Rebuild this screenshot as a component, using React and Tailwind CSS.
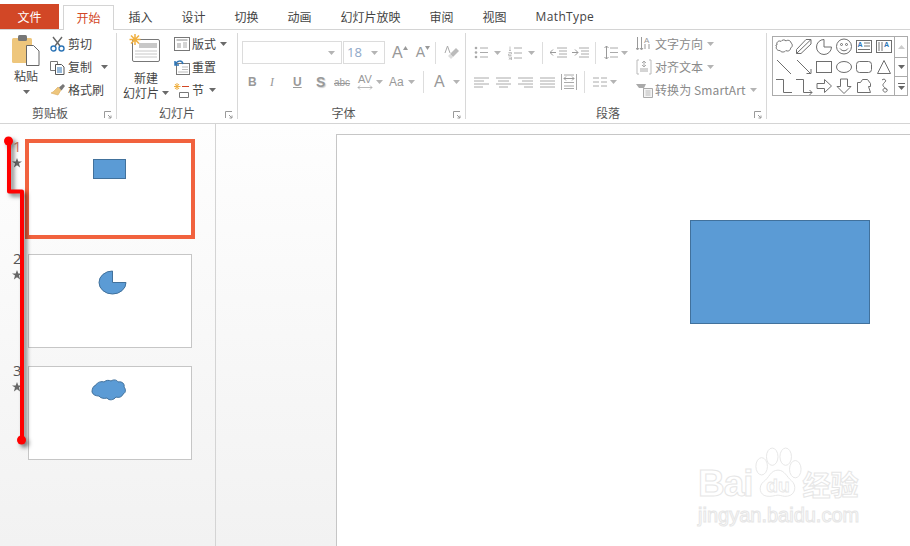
const FONT = "font-['Noto_Sans_CJK_SC','Noto_Sans',sans-serif]";

function Caret({ className = "", dim = false }) {
  return (
    <svg width="7" height="4" viewBox="0 0 7 4" className={`shrink-0 ${className}`}>
      <path d="M0 0H7L3.5 4Z" fill={dim ? "#b4b4b4" : "#6a6a6a"} />
    </svg>
  );
}

function Launcher() {
  return (
    <svg width="8" height="8" viewBox="0 0 8 8" className="absolute bottom-[3px] right-[4px]">
      <path d="M.5 7V.5H7M4 4l3 3M4.5 7H7V4.5" fill="none" stroke="#9a9a9a" />
    </svg>
  );
}

function Ico({ w = 16, h = 16, children, className = "" }) {
  return (
    <svg width={w} height={h} viewBox={`0 0 ${w} ${h}`} fill="none" className={`shrink-0 ${className}`}>
      {children}
    </svg>
  );
}

const tabs = ["插入", "设计", "切换", "动画", "幻灯片放映", "审阅", "视图"];

function TabBar() {
  return (
    <div className="flex h-[30px] items-end border-b border-[#d4d4d4] bg-white text-[12px] text-[#444]">
      <div className="flex h-[25px] w-[59px] items-center justify-center bg-[#d24726] text-white">文件</div>
      <div className="relative top-px ml-[4px] flex h-[25px] w-[51px] items-center justify-center border border-b-0 border-[#d4d4d4] bg-white text-[#d24726]">开始</div>
      {tabs.map((t) => (
        <div key={t} className="flex h-[25px] items-center px-[14.5px]">{t}</div>
      ))}
      <div className="flex h-[25px] items-center px-[14.5px] font-['Open_Sans',sans-serif] tracking-[0.35px]">MathType</div>
    </div>
  );
}

function Group({ label, className, children, labelClass = "" }) {
  return (
    <div className={`relative flex h-[92px] shrink-0 flex-col ${className}`}>
      <div className="flex min-h-0 flex-1">{children}</div>
      <div className={`pb-[1px] text-center text-[12px] leading-[16px] text-[#555] ${labelClass}`}>{label}</div>
      <Launcher />
    </div>
  );
}

function Sep() {
  return <div className="mt-[3px] h-[86px] w-px shrink-0 bg-[#d8d8d8]" />;
}

function Row({ icon, text, caret, className = "text-[#444]", cell = "w-[18px]" }) {
  return (
    <div className={`flex h-[23px] items-center whitespace-nowrap text-[12px] ${className}`}>
      <div className={`flex justify-start ${cell}`}>{icon}</div>
      <span>{text}</span>
      {caret}
    </div>
  );
}

function Clipboard() {
  return (
    <Group label="剪贴板" className="w-[116px]" labelClass="pr-[16px]">
      <div className="ml-[12px] flex w-[28px] flex-col items-center pt-[5px]">
        <Ico w={30} h={31}>
          <rect x="1" y="3" width="20" height="25" rx="1.5" fill="#eec67c" />
          <rect x="7" y="0" width="9" height="6" rx="1.5" fill="#777" />
          <path d="M15.5 10.5h7l5.5 5.5v14.5h-12.5z" fill="#fff" stroke="#666" />
        </Ico>
        <div className="mt-[2px] text-[12px] leading-[16px] text-[#444]">粘贴</div>
        <Caret className="mt-[6px]" />
      </div>
      <div className="ml-[10px] flex flex-col pt-[2.5px]">
        <Row text="剪切" icon={
          <Ico w={15} h={16}>
            <path d="M3 1l7 9M12 1L5 10" stroke="#666" strokeWidth="1.4" />
            <circle cx="3.5" cy="12.5" r="2.5" stroke="#2e75b6" strokeWidth="1.4" />
            <circle cx="11.5" cy="12.5" r="2.5" stroke="#2e75b6" strokeWidth="1.4" />
          </Ico>} />
        <Row text="复制" caret={<Caret className="ml-[9px]" />} icon={
          <Ico w={15} h={15}>
            <path d="M.5 1.500h7v9h-7z" fill="#fff" stroke="#777" />
            <path d="M5.500 4.500h6l2.500 2.500v7.500H5.500z" fill="#fff" stroke="#555" />
            <path d="M7 8h5M7 10h5M7 12h5" stroke="#2e75b6" />
          </Ico>} />
        <Row text="格式刷" icon={
          <Ico w={16} h={14}>
            <path d="M8 4l3 3-3 5-7-2 2-1z" fill="#eec67c" stroke="#d8a95c" strokeWidth=".6" />
            <path d="M9 4.500l4-3.500 2 2-3.500 4.500z" fill="#777" />
          </Ico>} />
      </div>
    </Group>
  );
}

function SlidesGroup() {
  return (
    <Group label="幻灯片" className="w-[120px]">
      <div className="ml-[6px] flex w-[46px] flex-col items-center pt-[4px]">
        <Ico w={32} h={28} className="-ml-[3px]">
          <rect x="3.5" y="5.5" width="27" height="22" rx="1.5" fill="#fff" stroke="#777" />
          <rect x="10" y="9" width="18" height="5" fill="#c8c8c8" />
          <path d="M6 17h22M6 20h22M6 23h22" stroke="#c8c8c8" />
          <path d="M6 0v11M0.5 5.5h11M2 1.5l8 8M10 1.5l-8 8" stroke="#f0b040" strokeWidth="1.5" />
        </Ico>
        <div className="mt-[8px] whitespace-nowrap text-[12px] leading-[15px] text-[#444]">新建</div>
        <div className="flex items-center whitespace-nowrap text-[12px] leading-[15px] text-[#444]">
          幻灯片<Caret className="ml-[3px]" />
        </div>
      </div>
      <div className="ml-[5px] flex flex-col pt-[2.5px] text-[12px]">
        <Row text="版式" caret={<Caret className="ml-[4px]" />} icon={
          <Ico w={16} h={14}>
            <rect x=".5" y=".5" width="15" height="13" fill="#fff" stroke="#777" />
            <path d="M2.500 3h11" stroke="#888" /><path d="M3 6h4v5H3z" fill="#ccc" /><path d="M9 6h4M9 8h4M9 10h4" stroke="#aaa" />
          </Ico>} />
        <Row text="重置" icon={
          <Ico w={16} h={15}>
            <rect x="2.500" y="3.500" width="13" height="11" fill="#fff" stroke="#777" />
            <path d="M8 7h6M8 9.500h6M4 12h10" stroke="#bbb" />
            <path d="M1 5c2-5 7-5 8-1M1 1v4h4" stroke="#2e75b6" strokeWidth="1.5" />
          </Ico>} />
        <Row text="节" caret={<Caret className="ml-[5px]" />} icon={
          <Ico w={16} h={15}>
            <path d="M3 0v7M0 3.500h6.500M1 1l4 5M5 1L1 6" stroke="#f0b040" />
            <path d="M8 3.500h7" stroke="#d24726" />
            <path d="M5.500 9.500h9v5h-9z" stroke="#777" />
          </Ico>} />
      </div>
    </Group>
  );
}

function FontGroup() {
  const t = "text-[#999] font-['Liberation_Sans',sans-serif]";
  return (
    <Group label="字体" className="w-[227px]" labelClass="pr-[16px]">
      <div className="flex flex-col pl-[4px] pt-[11px]">
        <div className="flex h-[23px] items-center">
          <div className="flex h-[23px] w-[100px] items-center justify-end border border-[#dcdcdc] bg-white pr-[6px]"><Caret dim /></div>
          <div className="ml-[1px] flex h-[23px] w-[42px] items-center justify-between border border-[#dcdcdc] bg-white pl-[3px] pr-[6px]">
            <span className="font-['Open_Sans',sans-serif] text-[13px] text-[#8fa8c8]">18</span><Caret dim />
          </div>
          <span className={`ml-[7px] text-[16px] ${t}`}>A</span>
          <Ico w={5} h={4} className="-mt-[10px]"><path d="M0 4L2.500 0 5 4z" fill="#999" /></Ico>
          <span className={`ml-[8px] text-[14px] ${t}`}>A</span>
          <Ico w={5} h={4} className="-mt-[10px]"><path d="M0 0L2.500 4 5 0z" fill="#999" /></Ico>
          <div className="ml-[5px] h-[22px] w-px bg-[#ddd]" />
          <Ico w={16} h={16} className="ml-[8px]">
            <path d="M6 9l6-6 3 3-6 6z" fill="#bbb" /><path d="M4 11l2-2 3 3-2 2z" fill="#ddd" />
            <path d="M1 8l2.500-7L6 8" stroke="#aaa" />
          </Ico>
        </div>
        <div className="mt-[7px] flex h-[22px] items-center">
          <span className={`ml-[6px] w-[8px] text-[12px] font-bold ${t}`}>B</span>
          <span className="ml-[14px] w-[6px] font-['Liberation_Serif',serif] text-[12px] italic text-[#999]">I</span>
          <span className={`ml-[17px] w-[9px] text-[12px] font-bold underline ${t}`}>U</span>
          <span className={`ml-[14px] w-[9px] text-[14px] font-bold [text-shadow:1px_1px_1px_#ccc] ${t}`}>S</span>
          <span className={`ml-[9px] w-[16px] text-[10px] line-through ${t}`}>abc</span>
          <div className="ml-[7px] flex h-[18px] w-[16px] flex-col items-center">
            <span className={`text-[11px] leading-[12px] ${t}`}>AV</span>
            <Ico w={16} h={5}><path d="M1 2.500h14M1 2.500l2-2M1 2.500l2 2M15 2.500l-2-2M15 2.500l-2 2" stroke="#aaa" strokeWidth=".8" /></Ico>
          </div>
          <Caret dim className="ml-[3px]" />
          <span className={`ml-[6px] w-[17px] text-[12px] ${t}`}>Aa</span>
          <Caret dim className="ml-[2px]" />
          <div className="ml-[8px] h-[22px] w-px bg-[#ddd]" />
          <span className={`ml-[10px] w-[11px] text-[16px] ${t}`}>A</span>
          <Caret dim className="ml-[8px]" />
        </div>
      </div>
    </Group>
  );
}

function Align({ a }) {
  const rows = [[0, 15], [a === "l" ? 0 : a === "r" ? 4 : a === "c" ? 2 : 0, a === "l" ? 10 : a === "r" ? 15 : a === "c" ? 13 : 15], [0, 15], [a === "l" ? 0 : a === "r" ? 6 : a === "c" ? 3 : 0, a === "l" ? 9 : a === "r" ? 15 : a === "c" ? 12 : 15]];
  return (
    <Ico w={15} h={11}>
      {rows.map(([s, e], i) => <path key={i} d={`M${s} ${i * 3 + 1}H${e}`} stroke="#aaa" />)}
    </Ico>
  );
}

function Paragraph() {
  const dim = "text-[#8a8a8a]";
  return (
    <Group label="段落" className="w-[300px]" labelClass="pr-[16px]">
      <div className="flex w-[170px] flex-col pl-[8px] pt-[11px]">
        <div className="flex h-[23px] items-center">
          <Ico w={14} h={13}>
            <circle cx="2" cy="2" r="1.3" fill="#aaa" /><circle cx="2" cy="6.5" r="1.3" fill="#aaa" /><circle cx="2" cy="11" r="1.3" fill="#aaa" />
            <path d="M6 2h8M6 6.500h8M6 11h8" stroke="#aaa" />
          </Ico>
          <Caret dim className="ml-[6px]" />
          <Ico w={14} h={14} className="ml-[7px]">
            <path d="M6 2h8M6 7h8M6 12h8" stroke="#aaa" />
            <path d="M2 .5v4M1 4.500h2M.5 6.500h3v1.500h-3v1.500h3M.5 11h3v3h-3M1 12.500h2.500" stroke="#aaa" strokeWidth=".7" />
          </Ico>
          <Caret dim className="ml-[6px]" />
          <div className="ml-[7px] h-[22px] w-px bg-[#ddd]" />
          <Ico w={17} h={11} className="ml-[7px]">
            <path d="M7 1h10M9 4h8M9 7h8M7 10h10" stroke="#aaa" /><path d="M0 5.500h6M0 5.500l3-3M0 5.500l3 3" stroke="#999" />
          </Ico>
          <Ico w={17} h={11} className="ml-[5px]">
            <path d="M7 1h10M9 4h8M9 7h8M7 10h10" stroke="#aaa" /><path d="M0 5.500h6M6 5.500l-3-3M6 5.500l-3 3" stroke="#999" />
          </Ico>
          <div className="ml-[6px] h-[22px] w-px bg-[#ddd]" />
          <Ico w={14} h={15} className="ml-[8px]">
            <path d="M2.500 1v13M.5 3l2-2 2 2M.5 12l2 2 2-2" stroke="#999" /><path d="M6 3h8M6 7.500h8M6 12h8" stroke="#aaa" />
          </Ico>
          <Caret dim className="ml-[3px]" />
        </div>
        <div className="mt-[7px] flex h-[22px] items-center gap-[7px]">
          <Align a="l" /><Align a="c" /><Align a="r" /><Align a="j" />
          <Ico w={16} h={16} className="-ml-[1px]">
            <path d="M.5 0v16M15.500 0v16" stroke="#aaa" /><path d="M3 1h10M3 12h10M3 14.500h10M3 8.500h10" stroke="#aaa" /><path d="M3 4.500h10M3 4.500l2-2M3 4.500l2 2M13 4.500l-2-2M13 4.500l-2 2" stroke="#999" />
          </Ico>
          <div className="h-[22px] w-px bg-[#ddd]" />
          <Ico w={14} h={10} className="ml-[1px]">
            <path d="M0 1h6M8 1h6M0 5h6M8 5h6M0 9h6M8 9h6" stroke="#aaa" />
          </Ico>
          <Caret dim className="-ml-[4px]" />
        </div>
      </div>
      <div className="flex flex-col pt-[2.5px]">
        <Row className={dim} cell="w-[19px]" text="文字方向" caret={<Caret dim className="ml-[4px]" />} icon={
          <Ico w={16} h={16}>
            <path d="M1.500 1v12M5.500 1v12M9 8v5M13 8v5" stroke="#999" /><path d="M0 12l1.500 2 1.500-2M4 12l1.500 2 1.500-2" stroke="#999" />
            <text x="8" y="7" fontSize="8" fill="#999" fontFamily="Liberation Sans">A</text>
          </Ico>} />
        <Row className={dim} cell="w-[19px]" text="对齐文本" caret={<Caret dim className="ml-[4px]" />} icon={
          <Ico w={16} h={16}>
            <path d="M3 1H1v14h2M13 1h2v14h-2" stroke="#bbb" /><path d="M8 2v6M6 4l2-2 2 2M6 6l2 2 2-2" stroke="#aaa" /><path d="M4 10h8M4 12h8" stroke="#aaa" />
          </Ico>} />
        <Row className={`${dim} tracking-[0.1px]`} cell="w-[19px]" text="转换为 SmartArt" caret={<Caret dim className="ml-[4px]" />} icon={
          <Ico w={17} h={16}>
            <path d="M0 2h10l-3 6v-2H3z" fill="#aaa" /><path d="M7.500 6.500h9v9h-9z" fill="#f4f4f4" stroke="#aaa" /><path d="M9.500 9h5M9.500 11h5M9.500 13h5" stroke="#bbb" />
          </Ico>} />
      </div>
    </Group>
  );
}

const S = "#6e6e6e";
const shapes = [
  <path d="M3 8c-1-3 2-5 4-3.500 1-2 4-2 5-.5 1.500-1.500 5-.5 5 2 2 1 1.500 4.500-.5 5 .5 2-2.500 4-4.500 2.500-1.500 2-5 2-6 0-2.500.5-4.500-2-3.500-4-1-.5-1-1.500.5-1.500z" stroke={S} />,
  <path d="M2.500 12.500L12 2.500h5v4.500L7 16.500H2.500zM2.500 16.500L17 2.500" stroke={S} />,
  <path d="M10 2.500a7.500 7.500 0 1 0 7.500 7.500H10z" stroke={S} />,
  <><circle cx="10" cy="9.500" r="7.500" stroke={S} /><circle cx="7.500" cy="7.500" r="1" stroke={S} /><circle cx="12.500" cy="7.500" r="1" stroke={S} /><path d="M6 11.500c2 3 6 3 8 0" stroke={S} /></>,
  <><rect x="2.500" y="3.500" width="15" height="12" fill="#fff" stroke={S} /><path d="M10 6h6M10 9h6M4 12.500h12" stroke="#777" /><text x="3.500" y="10" fontSize="7" fontWeight="700" fill="#2e75b6" fontFamily="Liberation Sans">A</text></>,
  <><rect x="2.500" y="3.500" width="15" height="12" fill="#fff" stroke={S} /><path d="M5 5v9M8 5v9" stroke="#777" /><text x="10" y="10" fontSize="7" fontWeight="700" fill="#2e75b6" fontFamily="Liberation Sans">A</text></>,
  <path d="M3 3l14 14" stroke={S} />,
  <path d="M3 3l14 14M12.500 16.500H17V12" stroke={S} />,
  <rect x="2.500" y="4.500" width="15" height="11" stroke={S} />,
  <ellipse cx="10" cy="10" rx="7.500" ry="5.500" stroke={S} />,
  <rect x="2.500" y="4.500" width="15" height="11" rx="3" stroke={S} />,
  <path d="M10 3.500l6.500 13h-13z" stroke={S} />,
  <path d="M2 3.500h7.500v13H18" stroke={S} />,
  <path d="M2 3.500h7.500v13H18M15.500 14l2.500 2.500-2.500 2.500" stroke={S} />,
  <path d="M3 7.500h7.500V3.500l7 6.500-7 6.500v-4H3z" stroke={S} />,
  <path d="M6.500 3h7v7.500h3.500l-7 7-7-7h3.500z" stroke={S} />,
  <path d="M3.500 6.500h3l2-3h5l3 4v3h-2l2 6h-13z" stroke={S} />,
  <path d="M8 4c2-2 5 0 3 2s-3 3-1 5 4 2 3 4-4 1-4-1 3-2 4 0" stroke={S} />,
];

function Gallery() {
  return (
    <div className="ml-[5px] mt-[6px] flex h-[60px] shrink-0 border border-[#ababab] bg-white">
      <div className="grid w-[121px] grid-cols-[repeat(6,20px)] grid-rows-[repeat(3,19.5px)] pl-[1px]">
        {shapes.map((s, i) => (
          <Ico key={i} w={20} h={20}>{s}</Ico>
        ))}
      </div>
      <div className="flex w-[13px] flex-col border-l border-[#ababab]">
        <div className="flex h-[20px] items-center justify-center">
          <Ico w={7} h={4}><path d="M0 4L3.500 0 7 4z" fill="#ccc" /></Ico>
        </div>
        <div className="flex h-[19px] items-center justify-center border-t border-[#ababab]">
          <Ico w={7} h={4}><path d="M0 0H7L3.500 4Z" fill="#666" /></Ico>
        </div>
        <div className="flex flex-1 flex-col items-center justify-center gap-[2px] border-t border-[#ababab]">
          <div className="h-px w-[7px] bg-[#666]" />
          <Ico w={7} h={4}><path d="M0 0H7L3.500 4Z" fill="#666" /></Ico>
        </div>
      </div>
    </div>
  );
}

function Ribbon() {
  return (
    <div className="flex h-[94px] items-start border-b border-[#d4d4d4] bg-white">
      <Clipboard /><Sep /><SlidesGroup /><Sep /><FontGroup /><Sep /><Paragraph /><Sep /><Gallery />
    </div>
  );
}

function Star() {
  return (
    <svg width="10" height="10" viewBox="0 0 10 10"><path d="M5 0l1.300 3.400H10L7 5.600 8.100 9.500 5 7.200 1.900 9.500 3 5.600 0 3.400h3.700z" fill="#666" /></svg>
  );
}

function NumCol({ n, active, className }) {
  return (
    <div className={`flex shrink-0 flex-col items-start ${className}`}>
      <div className={`pl-[1px] font-['Open_Sans',sans-serif] text-[15px] leading-[15px] ${active ? "text-[#d2775f]" : "text-[#555]"}`}>{n}</div>
      <div className="mt-[4px]"><Star /></div>
    </div>
  );
}

function Thumbs() {
  return (
    <div className="flex w-[216px] shrink-0 flex-col border-r border-[#d4d4d4] bg-gradient-to-b from-[#fefefe] to-[#f2f2f2] pl-[12px] pt-[15px]">
      <div className="flex">
        <NumCol n="1" active className="w-[13px]" />
        <div className="flex h-[100px] w-[170px] justify-center border-4 border-[#f1623e] bg-white pr-[1px] pt-[16px]">
          <div className="h-[20px] w-[33px] border border-[#41719c] bg-[#5b9bd5]" />
        </div>
      </div>
      <div className="mt-[15px] flex">
        <NumCol n="2" className="-mt-[3px] w-[16px]" />
        <div className="flex h-[94px] w-[164px] justify-center border border-[#c6c6c6] bg-white pt-[15px]">
          <svg width="30" height="25" viewBox="0 0 30 25" className="ml-[5px]">
            <path d="M14.500 1a13.500 11.500 0 1 0 13.500 11.500H14.500z" fill="#5b9bd5" stroke="#41719c" />
          </svg>
        </div>
      </div>
      <div className="mt-[18px] flex">
        <NumCol n="3" className="-mt-[3px] w-[16px]" />
        <div className="flex h-[94px] w-[164px] justify-center border border-[#c6c6c6] bg-white pt-[12px]">
          <svg width="38" height="24" viewBox="0 0 38 24" className="-ml-[2px]">
            <path d="M6 6c1-3 6-4 8-3 2-2 5-2 7-1 3-2 6-1 7 1 4-1 7 2 6 5 2 2 2 6-1 7-1 3-4 4-7 3-2 3-7 4-9 1-3 1-7 0-8-2-3 0-6-1-7-4 0-3 1-6 4-7z" fill="#5b9bd5" stroke="#41719c" />
          </svg>
        </div>
      </div>
    </div>
  );
}

function Watermark() {
  const stroke = "text-white [-webkit-text-stroke:1px_#e6e6e6]";
  return (
    <div className="pointer-events-none absolute left-[698px] top-[446px] flex w-[170px] flex-col">
      <div className="flex h-[56px] items-end">
        <span className={`font-['Liberation_Sans',sans-serif] text-[37px] font-bold leading-[36px] tracking-[-1px] ${stroke}`}>Bai</span>
        <svg width="50" height="56" viewBox="0 0 52 56" className="shrink-0">
          <g fill="#fff" stroke="#e6e6e6" strokeWidth="1">
            <ellipse cx="9" cy="20" rx="6" ry="9" />
            <ellipse cx="20" cy="10" rx="6" ry="9" />
            <ellipse cx="34" cy="10" rx="6" ry="9" />
            <ellipse cx="44" cy="23" rx="6" ry="9" />
            <path d="M26 24c7 0 9 7 14 11 6 5 4 15-4 16-4 1-7-1-10-1s-7 2-12 1c-7-1-9-10-3-15 6-4 7-12 15-12z" />
          </g>
          <text x="26" y="47" textAnchor="middle" fontSize="20" fontWeight="700" fill="#fff" stroke="#e6e6e6" strokeWidth=".8" fontFamily="Liberation Sans">du</text>
        </svg>
        <span className={`whitespace-nowrap font-['Noto_Sans_CJK_SC',sans-serif] text-[28px] font-bold leading-[36px] ${stroke}`}>经验</span>
      </div>
      <div className={`mt-[1px] whitespace-nowrap font-['Liberation_Sans',sans-serif] text-[20px] leading-[24px] ${stroke}`}>jingyan.baidu.com</div>
    </div>
  );
}

function Annotation() {
  return (
    <svg width="40" height="320" viewBox="0 0 40 320" className="pointer-events-none absolute left-0 top-[130px] drop-shadow-[3px_3px_2px_rgba(0,0,0,0.5)]">
      <path d="M9 11V61.500H22V310" fill="none" stroke="#f00" strokeWidth="4" strokeLinejoin="round" />
      <circle cx="8.500" cy="11" r="4.500" fill="#f00" />
      <circle cx="21.500" cy="310" r="4.500" fill="#f00" />
    </svg>
  );
}

export default function App() {
  return (
    <div className={`relative flex h-[546px] w-[910px] flex-col overflow-hidden bg-white ${FONT}`}>
      <TabBar />
      <Ribbon />
      <div className="flex min-h-0 flex-1">
        <Thumbs />
        <div className="min-w-0 flex-1 overflow-hidden bg-gradient-to-b from-[#fefefe] to-[#f2f2f2] pl-[120px] pt-[10px]">
          <div className="h-[600px] w-[800px] border border-[#c6c6c6] bg-white pl-[353px] pt-[85px]">
            <div className="h-[104px] w-[180px] border border-[#41719c] bg-[#5b9bd5]" />
          </div>
        </div>
      </div>
      <Annotation />
      <Watermark />
    </div>
  );
}
